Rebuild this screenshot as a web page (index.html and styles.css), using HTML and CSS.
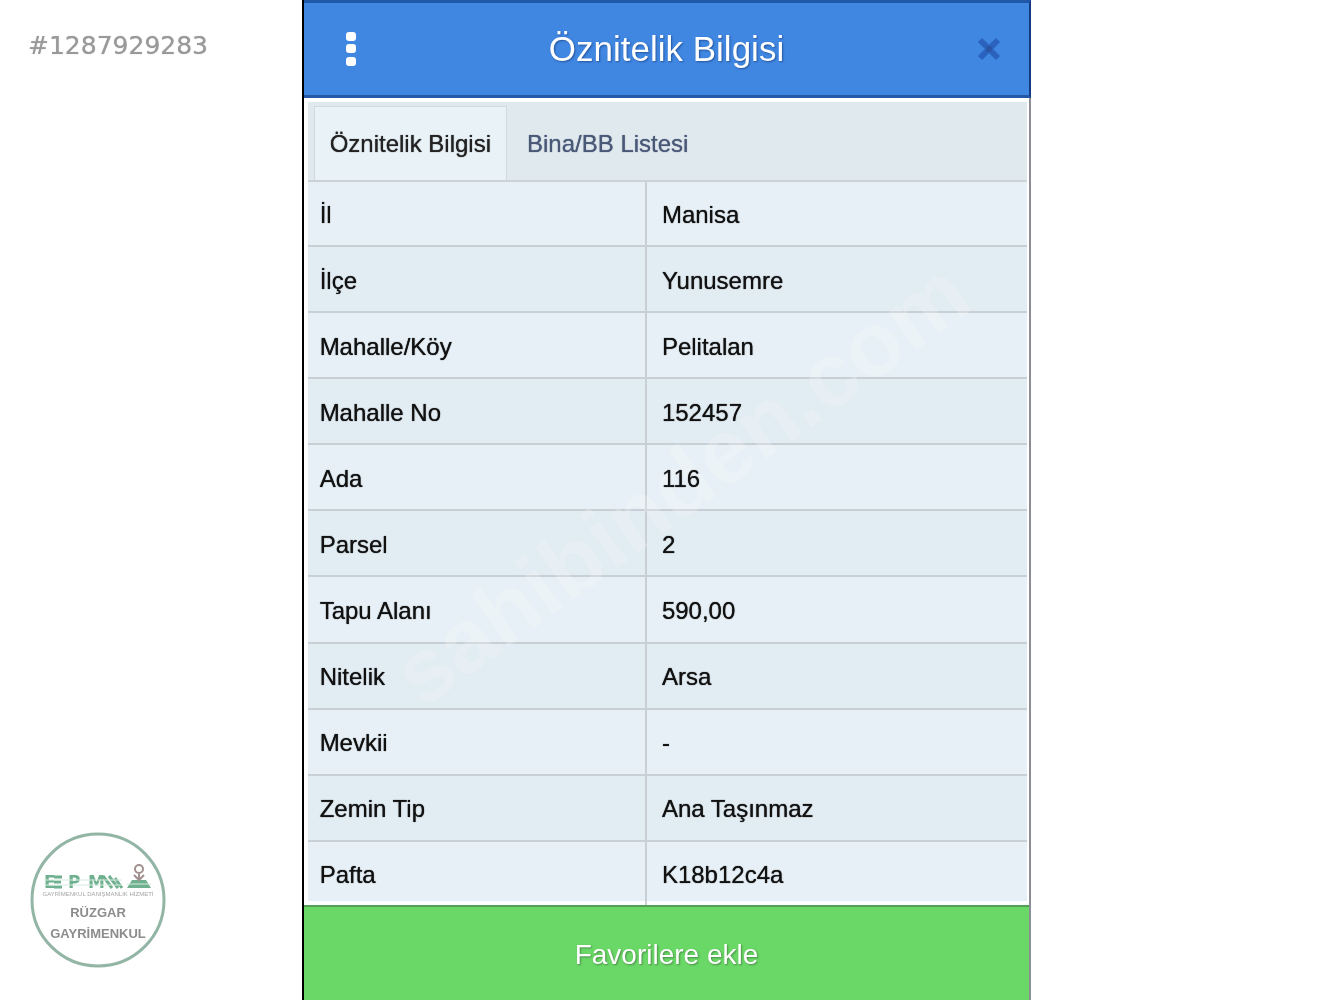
FILE: index.html
```html
<!DOCTYPE html>
<html lang="tr">
<head>
  <meta charset="UTF-8">
  <meta name="viewport" content="width=device-width, initial-scale=1.0">
  <title>Öznitelik Bilgisi</title>
  <link rel="stylesheet" href="styles.css">
</head>
<body>
  <aside class="side">
    <p class="listing-no">#1287929283</p>

    <svg class="agency" viewBox="0 0 136 136" role="img" aria-label="Rüzgar Gayrimenkul">
      <circle class="agency-ring" cx="68" cy="68" r="66" />
      <g class="agency-mark">
        <text x="14" y="56">E</text>
        <text x="38" y="56">P</text>
        <text x="58" y="56">M</text>
      </g>
      <path class="agency-bars" d="M24 45h8M24 50h7M24 55h8" />
      <path class="agency-hatch" d="M73 44l9 12M79 44l9 12M85 46l7 10" />
      <path class="agency-base" d="M102 48h14l5 8H97z" />
      <path class="agency-figure" d="M109 49v-7M104 43l5 5 5-5" />
      <circle class="agency-figure" cx="109" cy="37" r="4" />
      <path class="agency-stripes" d="M14 48h78M14 53h78M97 52h24" />
      <text class="agency-small" x="68" y="64">GAYRİMENKUL DANIŞMANLIK HİZMETİ</text>
      <text class="agency-name" x="68" y="85">RÜZGAR</text>
      <text class="agency-name" x="68" y="106">GAYRİMENKUL</text>
    </svg>
  </aside>

  <main class="panel">
    <header class="header">
      <button type="button" class="icon-button" aria-label="Menü">
        <svg width="16" height="40" viewBox="0 0 16 40">
          <g fill="#fff">
            <rect x="2" y="3" width="10" height="9" rx="3" />
            <rect x="2" y="15" width="10" height="9" rx="3" />
            <rect x="2" y="28" width="10" height="9" rx="3" />
          </g>
        </svg>
      </button>
      <h1>Öznitelik Bilgisi</h1>
      <button type="button" class="icon-button" aria-label="Kapat">
        <svg width="24" height="24" viewBox="0 0 24 24">
          <path d="M3 3l18 18M21 3L3 21" stroke="#2a62bd" stroke-width="6" />
          <path d="M9 12h6M12 9v6" stroke="#2a55a5" stroke-width="4" />
        </svg>
      </button>
    </header>

    <nav class="tabs">
      <a class="tab active" href="#oznitelik">Öznitelik Bilgisi</a>
      <a class="tab" href="#bina">Bina/BB Listesi</a>
    </nav>

    <section class="details" id="oznitelik">
      <table>
        <tbody>
          <tr><th scope="row">İl</th><td>Manisa</td></tr>
          <tr><th scope="row">İlçe</th><td>Yunusemre</td></tr>
          <tr><th scope="row">Mahalle/Köy</th><td>Pelitalan</td></tr>
          <tr><th scope="row">Mahalle No</th><td>152457</td></tr>
          <tr><th scope="row">Ada</th><td>116</td></tr>
          <tr><th scope="row">Parsel</th><td>2</td></tr>
          <tr><th scope="row">Tapu Alanı</th><td>590,00</td></tr>
          <tr><th scope="row">Nitelik</th><td>Arsa</td></tr>
          <tr><th scope="row">Mevkii</th><td>-</td></tr>
          <tr><th scope="row">Zemin Tip</th><td>Ana Taşınmaz</td></tr>
          <tr><th scope="row">Pafta</th><td>K18b12c4a</td></tr>
        </tbody>
      </table>
      <svg class="watermark" viewBox="0 0 720 724" aria-hidden="true">
        <text x="376" y="332" transform="rotate(-36 376 304)">sahibinden.com</text>
      </svg>
    </section>

    <button type="button" class="favorite">Favorilere ekle</button>
  </main>
</body>
</html>
```
FILE: styles.css
```css
* {
  box-sizing: border-box;
}

body {
  margin: 0;
  min-height: 100vh;
  display: grid;
  grid-template-columns: 31fr 75fr 31fr;
  background: #fff;
  font-family: "Liberation Sans", Arial, sans-serif;
  font-size: 24px;
}



.side {
  display: flex;
  flex-direction: column;
  justify-content: space-between;
  padding: 32px 28px;
}

.listing-no {
  margin: 0;
  font-family: "DejaVu Sans", Verdana, sans-serif;
  font-size: 25px;
  line-height: 28px;
  color: #999;
  text-shadow: 0 0 1px #aaa;
}

.agency {
  width: 136px;
  height: 136px;
  margin-left: 2px;
}

.agency-ring {
  fill: #fff;
  stroke: #92b5a5;
  stroke-width: 3;
}

.agency-mark {
  fill: #6fb08f;
  font: bold 17px "DejaVu Sans", sans-serif;
}

.agency-bars,
.agency-hatch {
  stroke: #6fb08f;
  stroke-width: 3;
}

.agency-base {
  fill: #6fb08f;
}

.agency-figure {
  fill: none;
  stroke: #a28f8f;
  stroke-width: 2;
}

.agency-stripes {
  stroke: #d8ebe1;
  stroke-width: 1;
}

.agency-small {
  fill: #a5a5a5;
  font-size: 6px;
  text-anchor: middle;
}

.agency-name {
  fill: #8c8c8c;
  font-size: 13px;
  font-weight: bold;
  text-anchor: middle;
}



.panel {
  display: flex;
  flex-direction: column;
  border-left: 2px solid #000;
  border-right: 2px solid #8d8d98;
}

.header {
  display: grid;
  grid-template-columns: 96px 1fr 80px;
  align-items: center;
  height: 98px;
  margin-right: -2px;
  border-top: 3px solid #1f58a8;
  border-right: 2px solid #143a80;
  border-bottom: 3px solid #2559a8;
  background: #4087e2;
}

.header h1 {
  margin: 0;
  padding-right: 16px;
  text-align: center;
  font-size: 35px;
  font-weight: normal;
  color: #fff;
  text-shadow: 1px 1px 2px #24549c;
}

.icon-button {
  display: flex;
  justify-content: center;
  padding: 0;
  border: none;
  background: none;
  cursor: pointer;
}



.tabs {
  display: flex;
  gap: 4px;
  height: 80px;
  margin: 4px 2px 0 4px;
  padding: 4px 0 0 6px;
  border-bottom: 2px solid #ccd3d7;
  background: #e0e9ed;
}

.tab {
  padding: 0 15px;
  border: 1px solid transparent;
  border-bottom: none;
  line-height: 74px;
  color: #4a5878;
  text-decoration: none;
  text-shadow: 0 0 1px #4a5878;
}

.tab.active {
  border-color: #d0d9dd;
  background: #e8f2f7;
  color: #222;
  text-shadow: 0 0 1px #222;
}



.details {
  position: relative;
  flex: 1;
  display: grid;
  padding: 0 2px 0 4px;
}

.details table {
  width: 100%;
  height: 100%;
  border-collapse: collapse;
  table-layout: fixed;
  color: #111;
  text-shadow: 0 0 1px #111;
}

.details tr {
  background: #e6f0f6;
  border-bottom: 2px solid #c8d0d5;
}

.details tr:nth-child(even) {
  background: #e2ecf3;
}

.details tr:last-child {
  border-bottom: none;
  box-shadow: inset 0 -4px #fff;
}

.details th,
.details td {
  padding: 3px 12px 0;
  text-align: left;
  font-weight: normal;
}

.details th {
  width: 47%;
  border-right: 2px solid #c8d0d5;
}

.details td {
  padding-left: 15px;
}

.watermark {
  position: absolute;
  inset: 0;
  width: 100%;
  height: 100%;
  opacity: 0.2;
  mix-blend-mode: overlay;
  pointer-events: none;
}

.watermark text {
  fill: #fff;
  font-size: 90px;
  font-weight: bold;
  text-anchor: middle;
}



.favorite {
  height: 95px;
  padding: 2px 0 0;
  border: none;
  border-top: 2px solid #539f58;
  background: #6ad866;
  color: #fff;
  font-family: inherit;
  font-size: 28px;
  text-shadow: 1px 1px 2px #4a8a4a;
  cursor: pointer;
}
```
